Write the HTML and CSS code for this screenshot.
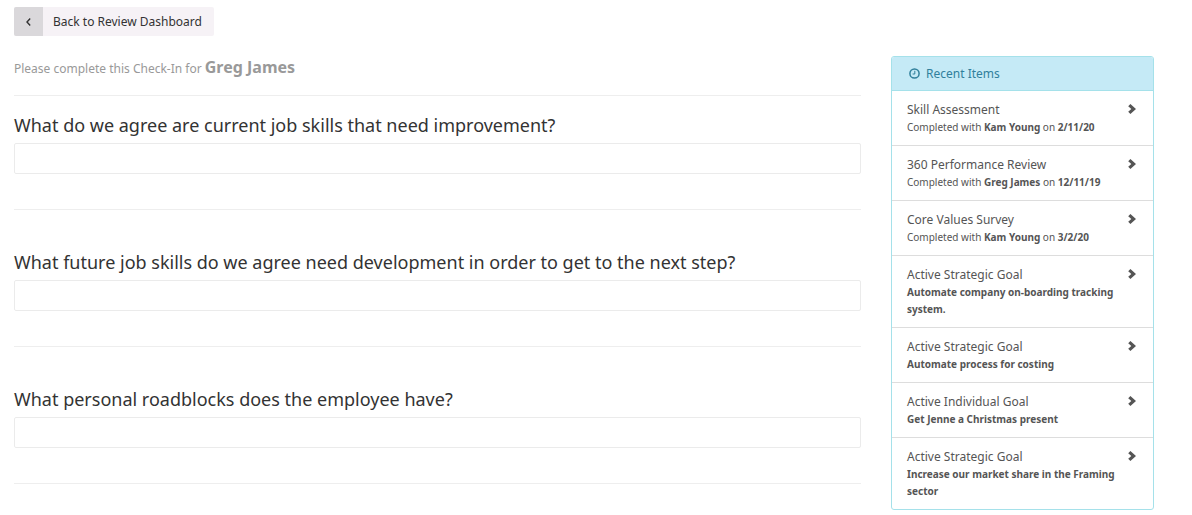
FILE: index.html
```
<!DOCTYPE html>
<html lang="en">
<head>
  <meta charset="UTF-8" />
  <meta name="viewport" content="width=device-width, initial-scale=1.0"/>
  <title>Check-In for Greg James</title>
  <link rel="stylesheet" href="styles.css">
</head>
<body>
  <!-- Shared icons -->
  <svg class="icon-defs" aria-hidden="true">
    <symbol id="chevron" viewBox="0 0 8 10">
      <path d="M.2 2.2 2.4 0 8 5 2.4 10 .2 7.8 3.3 5z" fill="currentColor"/>
    </symbol>
  </svg>

  <a class="back-btn" href="#">
    <span class="back-icon">
      <svg width="5" height="8" viewBox="0 0 5 8" aria-hidden="true">
        <path d="M4.2.6 1 4l3.2 3.4" fill="none" stroke="currentColor" stroke-width="1.4"/>
      </svg>
    </span>
    <span class="back-label">Back to Review Dashboard</span>
  </a>

  <div class="layout">
    <main>
      <p class="intro">Please complete this Check-In for <strong>Greg James</strong></p>

      <form>
        <div class="question">
          <label for="q1">What do we agree are current job skills that need improvement?</label>
          <input type="text" id="q1" />
        </div>
        <div class="question">
          <label for="q2">What future job skills do we agree need development in order to get to the next step?</label>
          <input type="text" id="q2" />
        </div>
        <div class="question">
          <label for="q3">What personal roadblocks does the employee have?</label>
          <input type="text" id="q3" />
        </div>
      </form>
    </main>

    <!-- Recent Items -->
    <aside class="panel">
      <h2 class="panel-heading">
        <svg width="11" height="11" viewBox="0 0 11 11" fill="none" stroke="currentColor" aria-hidden="true">
          <circle cx="5.5" cy="5.5" r="4.6" stroke-width="1.5"/>
          <path d="M5.8 2.8V6H3.6" stroke-width="1"/>
        </svg>
        Recent Items
      </h2>
      <a class="item" href="#">
        <span class="item-title">Skill Assessment</span>
        <svg class="chevron"><use href="#chevron"/></svg>
        <span class="item-text">Completed with <b>Kam Young</b> on <b>2/11/20</b></span>
      </a>
      <a class="item" href="#">
        <span class="item-title">360 Performance Review</span>
        <svg class="chevron"><use href="#chevron"/></svg>
        <span class="item-text">Completed with <b>Greg James</b> on <b>12/11/19</b></span>
      </a>
      <a class="item" href="#">
        <span class="item-title">Core Values Survey</span>
        <svg class="chevron"><use href="#chevron"/></svg>
        <span class="item-text">Completed with <b>Kam Young</b> on <b>3/2/20</b></span>
      </a>
      <a class="item" href="#">
        <span class="item-title">Active Strategic Goal</span>
        <svg class="chevron"><use href="#chevron"/></svg>
        <span class="item-text"><b>Automate company on-boarding tracking system.</b></span>
      </a>
      <a class="item" href="#">
        <span class="item-title">Active Strategic Goal</span>
        <svg class="chevron"><use href="#chevron"/></svg>
        <span class="item-text"><b>Automate process for costing</b></span>
      </a>
      <a class="item" href="#">
        <span class="item-title">Active Individual Goal</span>
        <svg class="chevron"><use href="#chevron"/></svg>
        <span class="item-text"><b>Get Jenne a Christmas present</b></span>
      </a>
      <a class="item" href="#">
        <span class="item-title">Active Strategic Goal</span>
        <svg class="chevron"><use href="#chevron"/></svg>
        <span class="item-text"><b>Increase our market share in the Framing sector</b></span>
      </a>
    </aside>
  </div>
</body>
</html>
```
FILE: styles.css
```
* {
  box-sizing: border-box;
}

body {
  margin: 0;
  padding: 7px 38px 0 14px;
  font-family: "Noto Sans", sans-serif;
  font-size: 12px;
  line-height: 17px;
  background: #fff;
  color: #555;
}

a {
  color: inherit;
  text-decoration: none;
}

.icon-defs {
  display: none;
}

.back-btn {
  display: inline-flex;
  height: 29px;
  border-radius: 2px;
  overflow: hidden;
  background: #f6f2f6;
  color: #333;
  vertical-align: top;
}

.back-icon {
  display: flex;
  align-items: center;
  justify-content: center;
  width: 29px;
  background: #dad8db;
}

.back-label {
  padding: 6px 12px 6px 10px;
}

.layout {
  display: grid;
  grid-template-columns: minmax(0, 1fr) 263px;
  gap: 30px;
  align-items: start;
  margin-top: 20px;
}

.intro {
  margin: 0;
  padding-bottom: 15px;
  border-bottom: 1px solid #eee;
  line-height: 22px;
  color: #999;
}

.intro strong {
  font-size: 16px;
}

.question {
  padding: 17px 0 35px;
  border-bottom: 1px solid #eee;
}

.question + .question {
  padding-top: 40px;
}

.question label {
  display: block;
  margin-bottom: 6px;
  font-size: 18px;
  line-height: 24px;
  color: #333;
}

.question input {
  display: block;
  width: 100%;
  height: 31px;
  padding: 5px 10px;
  border: 1px solid #ebebeb;
  border-radius: 2px;
  font: inherit;
}

.panel {
  border: 1px solid #a5e1ea;
  border-radius: 3px;
}

.panel-heading {
  display: flex;
  align-items: center;
  gap: 6px;
  margin: 0;
  padding: 8px 17px;
  border-bottom: 1px solid #a5e1ea;
  border-radius: 2px 2px 0 0;
  background: #c5eaf6;
  color: #31809c;
  font-size: 12px;
  font-weight: normal;
}

.item {
  display: grid;
  grid-template-columns: 1fr auto;
  padding: 10px 17px 9px 15px;
  line-height: 18px;
}

.item + .item {
  border-top: 1px solid #ddd;
}

.chevron {
  width: 8px;
  height: 10px;
  margin-top: 3px;
}

.item-text {
  grid-column: 1 / -1;
  font-size: 10px;
  line-height: 17px;
}
```
